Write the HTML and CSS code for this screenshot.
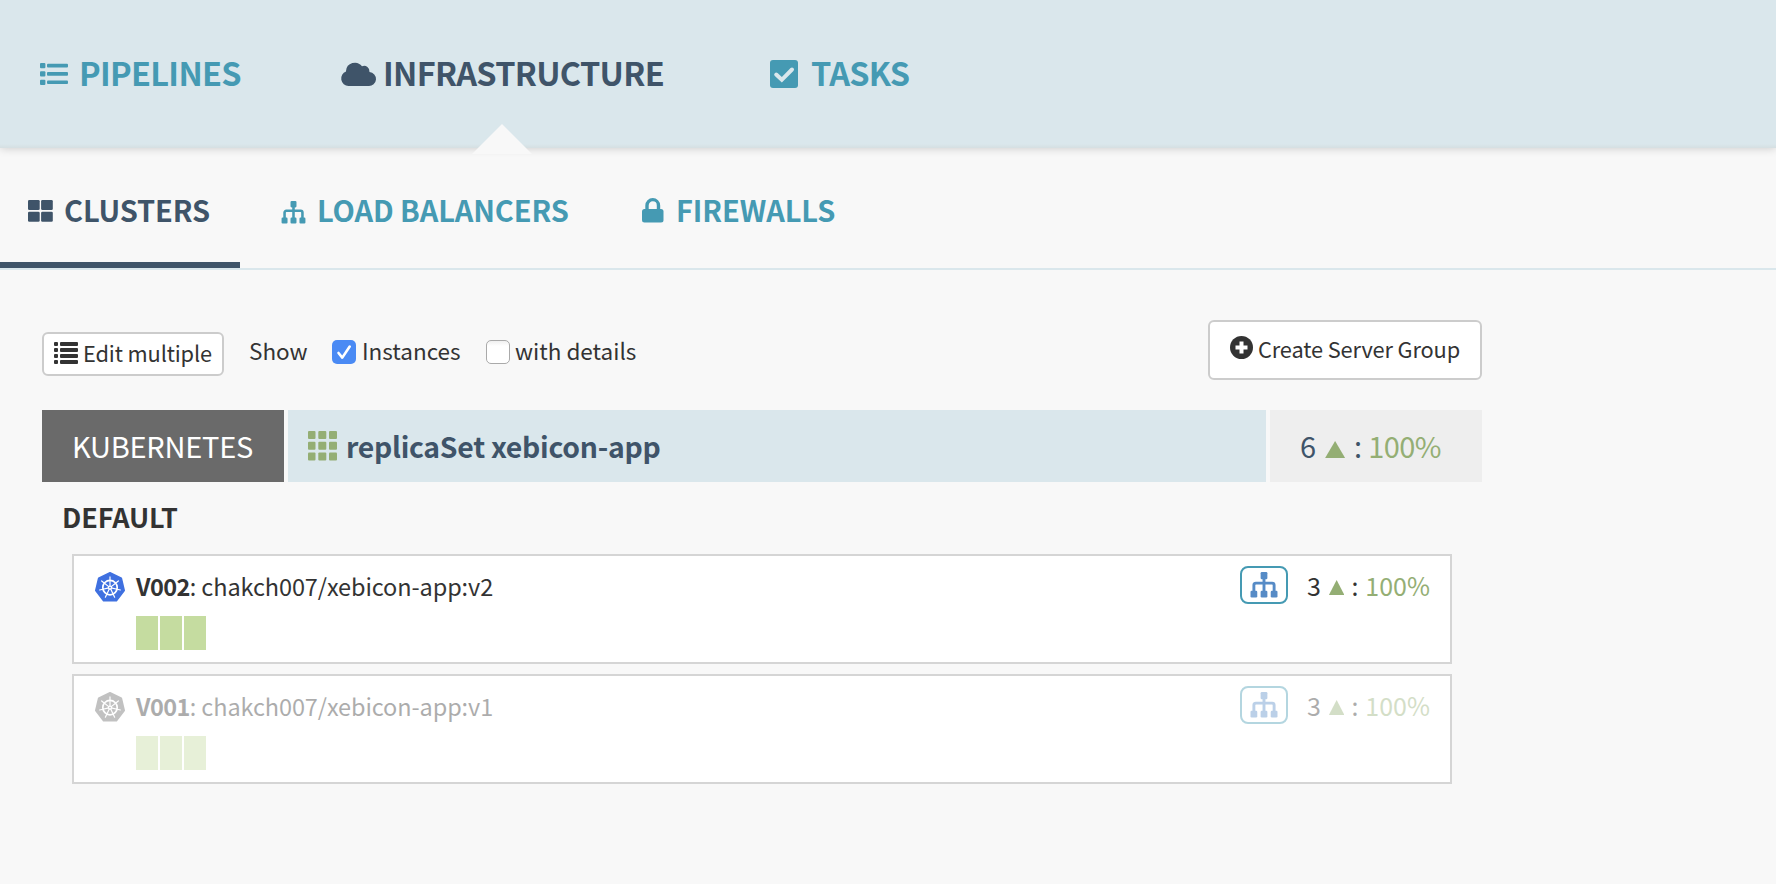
FILE: index.html
```html
<!DOCTYPE html>
<html lang="en">
<head>
<meta charset="utf-8">
<title>xebicon - Clusters</title>
<link rel="stylesheet" href="styles.css">
</head>
<body>
<svg class="defs" aria-hidden="true">
  <symbol id="sitemap" viewBox="0 0 28 27">
    <path d="M14 6v14M3.500 20v-6.500a2 2 0 0 1 2-2h17a2 2 0 0 1 2 2V20" fill="none" stroke="currentColor" stroke-width="3"/>
    <rect x="10.500" y="0" width="7" height="7.500" rx="1.300"/>
    <rect x="0" y="19.500" width="7" height="7" rx="1.300"/>
    <rect x="10.500" y="19.500" width="7" height="7" rx="1.300"/>
    <rect x="21" y="19.500" width="7" height="7" rx="1.300"/>
  </symbol>
  <symbol id="kube" viewBox="0 0 30 30">
    <path d="M15 .8 26.300 6.200 29.200 18.400 21.400 28.800H8.600L.8 18.400 3.700 6.200Z" fill="currentColor" stroke="currentColor" stroke-width="1.600" stroke-linejoin="round"/>
    <g fill="none" stroke="#fff">
      <circle cx="15" cy="15.600" r="7.200" stroke-width="1.700"/>
      <g stroke-width="1.200" stroke-linecap="round">
        <path id="spoke" d="M15 15.600V4.900"/>
        <use href="#spoke" transform="rotate(51.430 15 15.600)"/>
        <use href="#spoke" transform="rotate(102.860 15 15.600)"/>
        <use href="#spoke" transform="rotate(154.290 15 15.600)"/>
        <use href="#spoke" transform="rotate(205.710 15 15.600)"/>
        <use href="#spoke" transform="rotate(257.140 15 15.600)"/>
        <use href="#spoke" transform="rotate(308.570 15 15.600)"/>
      </g>
    </g>
    <circle cx="15" cy="15.600" r="2.200" fill="#fff"/>
    <circle cx="15" cy="15.600" r=".8" fill="currentColor"/>
  </symbol>
</svg>

<header class="header">
  <a class="tab tab-pipelines">
    <svg class="i-list" viewBox="0 0 28 22"><rect x="0" y="0" width="5.400" height="5.200" rx="1"/><rect x="0" y="8.300" width="5.400" height="5.200" rx="1"/><rect x="0" y="16.700" width="5.400" height="5.200" rx="1"/><rect x="7" y=".8" width="21" height="3.600" rx="1"/><rect x="7" y="9.100" width="21" height="3.600" rx="1"/><rect x="7" y="17.500" width="21" height="3.600" rx="1"/></svg>
    <span class="t">PIPELINES</span>
  </a>
  <a class="tab tab-infra active">
    <svg class="i-cloud" viewBox="0 0 34 24"><path d="M7.500 24A7.500 7.500 0 0 1 5 9.500 9 9 0 0 1 5 9 8.900 8.900 0 0 1 21 4.300 5.400 5.400 0 0 1 28.500 10 7 7 0 0 1 27.500 24Z"/></svg>
    <span class="t">INFRASTRUCTURE</span>
    <i class="pointer"></i>
  </a>
  <a class="tab tab-tasks">
    <svg class="i-check" viewBox="0 0 28 28"><rect width="28" height="28" rx="3"/><path d="M6.200 14.500 11.800 19.800 22 9.500" fill="none" stroke="#dae7ec" stroke-width="4" stroke-linecap="round"/></svg>
    <span class="t">TASKS</span>
  </a>
</header>

<nav class="subnav">
  <a class="sub sub-clusters active">
    <svg class="i-blocks" viewBox="0 0 25 22"><rect width="11.700" height="10" rx="1.300"/><rect x="13.100" width="11.700" height="10" rx="1.300"/><rect y="11.700" width="11.700" height="10" rx="1.300"/><rect x="13.100" y="11.700" width="11.700" height="10" rx="1.300"/></svg>
    <span class="t">CLUSTERS</span>
  </a>
  <a class="sub sub-lb">
    <svg class="i-map"><use href="#sitemap"/></svg>
    <span class="t">LOAD BALANCERS</span>
  </a>
  <a class="sub sub-fw">
    <svg class="i-lock" viewBox="0 0 22 25"><rect y="11" width="21.500" height="13.500" rx="2.500"/><path d="M5 12V7.400a5.750 5.750 0 0 1 11.500 0V12" fill="none" stroke="currentColor" stroke-width="3.400"/></svg>
    <span class="t">FIREWALLS</span>
  </a>
</nav>

<main class="main">
  <div class="toolbar">
    <button class="btn btn-edit">
      <svg class="i-rows" viewBox="0 0 24 22"><rect width="4" height="4" rx="1"/><rect y="6" width="4" height="4" rx="1"/><rect y="12" width="4" height="4" rx="1"/><rect y="18" width="4" height="4" rx="1"/><rect x="6" width="18" height="4" rx="1"/><rect x="6" y="6" width="18" height="4" rx="1"/><rect x="6" y="12" width="18" height="4" rx="1"/><rect x="6" y="18" width="18" height="4" rx="1"/></svg>
      <span class="t">Edit multiple</span>
    </button>
    <div class="filters">
      <span class="t show">Show</span>
      <label class="opt opt-inst"><span class="box on"><svg viewBox="0 0 24 24"><path d="M6.500 13 10.300 17.600 17.700 6.500"/></svg></span><span class="t">Instances</span></label>
      <label class="opt"><span class="box"></span><span class="t">with details</span></label>
    </div>
    <button class="btn btn-create">
      <svg class="i-plus" viewBox="0 0 23 23"><circle cx="11.500" cy="11.500" r="11.500"/><path d="M11.500 5.500v12M5.500 11.500h12" stroke="#fff" stroke-width="4"/></svg>
      <span class="t">Create Server Group</span>
    </button>
  </div>

  <section class="cluster">
    <div class="account"><span class="t">KUBERNETES</span></div>
    <div class="name">
      <svg class="i-grid" viewBox="0 0 29 30"><rect width="7.500" height="8" rx="1"/><rect x="10.300" width="8" height="8" rx="1"/><rect x="21" width="8" height="8" rx="1"/><rect y="10.700" width="7.500" height="8" rx="1"/><rect x="10.300" y="10.700" width="8" height="8" rx="1"/><rect x="21" y="10.700" width="8" height="8" rx="1"/><rect y="21.500" width="7.500" height="8" rx="1"/><rect x="10.300" y="21.500" width="8" height="8" rx="1"/><rect x="21" y="21.500" width="8" height="8" rx="1"/></svg>
      <span class="t">replicaSet xebicon-app</span>
    </div>
    <div class="health big"><span class="t">6</span><i class="up"></i><span class="t">:</span><span class="t pct">100%</span></div>
  </section>

  <h4 class="region"><span class="t">DEFAULT</span></h4>

  <article class="group">
    <svg class="i-kube"><use href="#kube"/></svg>
    <div class="body">
      <div class="title"><b class="t">V002</b><span class="t">: chakch007/xebicon-app:v2</span></div>
      <div class="instances"><i></i><i></i><i></i></div>
    </div>
    <span class="badge"><svg><use href="#sitemap"/></svg></span>
    <div class="health"><span class="t">3</span><i class="up"></i><span class="t">:</span><span class="t pct">100%</span></div>
  </article>
  <article class="group disabled">
    <svg class="i-kube"><use href="#kube"/></svg>
    <div class="body">
      <div class="title"><b class="t">V001</b><span class="t">: chakch007/xebicon-app:v1</span></div>
      <div class="instances"><i></i><i></i><i></i></div>
    </div>
    <span class="badge"><svg><use href="#sitemap"/></svg></span>
    <div class="health"><span class="t">3</span><i class="up"></i><span class="t">:</span><span class="t pct">100%</span></div>
  </article>
</main>
</body>
</html>
```

FILE: styles.css
```css
* { box-sizing: border-box; }
body {
  margin: 0;
  background: #f8f8f8;
  color: #333;
  font-family: "Noto Sans CJK SC", "Noto Sans", sans-serif;
  font-size: 21.8px;
}
svg { display: block; flex: none; fill: currentColor; overflow: visible; }
.defs { position: absolute; width: 0; height: 0; }
.t { white-space: nowrap; line-height: 32px; }

.header {
  position: relative;
  display: flex;
  height: 148px;
  padding-left: 40px;
  background: linear-gradient(#dae7ec 144px, #d5dfe2 148px);
  box-shadow: 0 0 9px rgba(0, 0, 0, .2);
}
.tab, .sub { display: flex; align-items: center; color: #459ab3; font-weight: 600; }
.tab { position: relative; height: 144px; font-size: 32.5px; letter-spacing: -.7px; }
.tab.active, .sub.active { color: #3f5469; }
.tab-pipelines { width: 301px; gap: 11px; }
.tab-infra { width: 429px; gap: 8px; }
.tab-tasks { gap: 13px; }
.i-list { width: 28px; height: 22px; margin-top: 4px; }
.i-cloud { width: 34px; height: 24px; margin-top: 4px; }
.i-check { width: 28px; height: 28px; margin-top: 4px; }
.pointer {
  position: absolute;
  left: 131px;
  top: 124px;
  width: 60px;
  height: 30px;
  background: #f8f8f8;
  clip-path: polygon(50% 0, 100% 100%, 0 100%);
}

.subnav { display: flex; height: 122px; border-bottom: 2px solid #dae7ec; }
.sub { height: 120px; padding-top: 3px; font-size: 29px; letter-spacing: -.1px; }
.sub .t { margin-top: -1px; }
.sub-clusters { width: 240px; padding: 9px 0 0 28px; border-bottom: 6px solid #3f5469; gap: 11px; }
.sub-lb { width: 361px; padding-left: 41px; gap: 11px; }
.sub-fw { padding-left: 41px; gap: 12px; }
.i-blocks { width: 25px; height: 22px; margin-top: 2px; }
.i-map { width: 25px; height: 23px; margin-top: 5px; }
.i-lock { width: 22px; height: 25px; margin-top: 1px; }

.main { width: 1482px; padding: 50px 0 0 42px; }
.toolbar { display: flex; height: 90px; }
.btn {
  display: flex;
  align-items: center;
  padding: 0;
  border: 2px solid #ccc;
  border-radius: 6px;
  background: #fff;
  color: #333;
  font: inherit;
  letter-spacing: -.14px;
}
.btn .t { margin-top: -2px; }
.btn-edit { width: 182px; height: 44px; margin-top: 12px; padding-left: 10px; gap: 5px; }
.i-rows { width: 24px; height: 22px; margin-top: -2px; }
.filters { display: flex; align-items: center; height: 44px; margin: 10px 0 0 25px; font-size: 22.500px; }
.filters .t { margin-top: -4px; }
.show { width: 83px; }
.opt { display: flex; align-items: center; gap: 5px; }
.opt-inst { width: 154px; gap: 6px; }
.box { width: 24px; height: 24px; border: 1px solid #aaa; border-radius: 5px; background: linear-gradient(#f0f0f0, #fff 5px); }
.box.on { border: 0; background: #4a8af4; }
.box path { fill: none; stroke: #fff; stroke-width: 2.600; stroke-linecap: round; stroke-linejoin: round; }
.btn-create { width: 274px; height: 60px; margin-left: auto; padding-left: 20px; gap: 5px; }
.i-plus { width: 23px; height: 23px; margin-top: -5px; }

.cluster { display: flex; gap: 4px; height: 72px; color: #3f5469; font-size: 29px; }
.cluster .t { margin-top: -2px; }
.account { display: flex; align-items: center; width: 242px; padding-left: 30px; background: #6a6a6a; color: #fff; letter-spacing: -.25px; }
.name { display: flex; align-items: center; flex: 1; padding-left: 20px; gap: 9px; background: #dae7ec; font-size: 28.400px; font-weight: 600; letter-spacing: -.28px; }
.cluster .name .t { margin-top: 0; }
.i-grid { width: 29px; height: 30px; margin-top: -1px; color: #94ae74; }
.health { display: flex; align-items: center; }
.big { width: 212px; padding-left: 30px; background: #eee; }
.up { width: 17px; height: 15px; margin: 3px 7px 0 8px; background: #94ae74; clip-path: polygon(50% 0, 100% 100%, 0 100%); }
.big .up { width: 20px; height: 17px; margin: 7px 9px 0; }
.pct { margin-left: 7px; color: #94ae74; }
.big .pct { margin-left: 6px; letter-spacing: -.6px; }

.region { height: 72px; margin: 0; padding: 15px 0 0 20px; font-size: 27px; font-weight: 600; letter-spacing: -.1px; }
.group {
  display: flex;
  width: 1380px;
  height: 110px;
  margin: 0 0 10px 30px;
  padding: 10px 20px 0 21px;
  border: 2px solid #d5d5d5;
  background: #fff;
  font-size: 23.500px;
}
.i-kube { width: 30px; height: 30px; margin: 6px 11px 0 0; color: #3f70e0; }
.body { flex: 1; }
.title { display: flex; height: 42px; padding-top: 4px; letter-spacing: -.1px; }
.title b { font-weight: 600; letter-spacing: -.6px; }
.instances { display: flex; gap: 2px; margin-top: 8px; }
.instances i { width: 22px; height: 34px; background: #c5dca0; }
.badge { width: 48px; height: 38px; padding: 4px 8px; border: 2px solid #459ab3; border-radius: 8px; color: #568bc6; }
.badge svg { width: 28px; height: 26px; }
.group .health { width: 123px; height: 40px; margin-left: 19px; font-size: 25px; }
.group .health .t { margin-top: -3px; }
.disabled > * { opacity: .4; }
.disabled .i-kube { color: #666; }
```
